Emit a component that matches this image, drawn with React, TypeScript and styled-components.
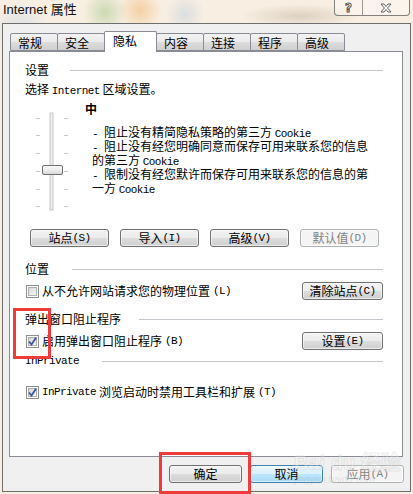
import React from "react";
import styled, { createGlobalStyle } from "styled-components";

const GlobalStyle = createGlobalStyle`
  html, body {
    margin: 0;
    padding: 0;
    width: 413px;
    height: 494px;
    overflow: hidden;
  }
  body {
    font-family: "Noto Sans CJK SC", "Liberation Sans", sans-serif;
    font-size: 12px;
    color: #000;
    background: #f7eddd;
  }
`;

const Screen = styled.div`
  position: relative;
  width: 413px;
  height: 494px;
  display: flex;
  flex-direction: column;
  background: radial-gradient(circle at 105px 12px, rgba(150, 190, 120, 0.45), transparent 22px),
    radial-gradient(circle at 140px 10px, rgba(240, 170, 90, 0.45), transparent 22px),
    radial-gradient(circle at 185px 14px, rgba(190, 205, 225, 0.5), transparent 20px),
    radial-gradient(ellipse 60px 12px at 300px 16px, rgba(170, 150, 130, 0.35), transparent),
    radial-gradient(circle at 20px 30px, rgba(200, 215, 235, 0.6), transparent 30px),
    #f8efe2;
`;

const TitleBar = styled.div`
  height: 23px;
  display: flex;
  justify-content: space-between;
  align-items: flex-start;
`;

const Caption = styled.div`
  padding-left: 3px;
  font-family: "Liberation Sans", "Noto Sans CJK SC", sans-serif;
  font-size: 13px;
  line-height: 20px;
  color: #111;
`;

const CaptionButtons = styled.div`
  display: flex;
  margin-right: 3px;
  height: 15px;
  border: 1px solid rgba(90, 90, 90, 0.75);
  border-top: none;
  border-radius: 0 0 4px 4px;
  background: rgba(255, 255, 255, 0.35);
  overflow: hidden;
`;

const CaptionButton = styled.div<{ $w: number; $divider?: boolean }>`
  width: ${(p) => p.$w}px;
  display: flex;
  align-items: center;
  justify-content: center;
  border-right: ${(p) => (p.$divider ? "1px solid rgba(90,90,90,0.6)" : "none")};
  font-family: "DejaVu Sans", sans-serif;
  font-weight: bold;
  font-size: 12px;
  color: #fff;
  -webkit-text-stroke: 1px #555;
`;

const Frame = styled.div`
  flex: 1;
  margin: 0 2px 2px 2px;
  border: 1px solid #6e6e6e;
  background: #f0f0f0;
  display: flex;
  flex-direction: column;
`;

const TabStrip = styled.div`
  display: flex;
  align-items: flex-end;
  height: 20px;
  margin: 7px 0 0 7px;
  position: relative;
  z-index: 1;
`;

const Tab = styled.div<{ $active?: boolean }>`
  width: ${(p) => (p.$active ? 53 : 48)}px;
  height: ${(p) => (p.$active ? 21 : 18)}px;
  margin-left: -1px;
  margin-bottom: ${(p) => (p.$active ? -1 : 0)}px;
  box-sizing: border-box;
  border: 1px solid #898c95;
  border-bottom: ${(p) => (p.$active ? "none" : "1px solid #898c95")};
  border-radius: 2px 2px 0 0;
  padding: ${(p) => (p.$active ? "1px 0 0 8px" : "1px 0 0 7px")};
  line-height: 15px;
  background: ${(p) =>
    p.$active
      ? "#fff"
      : "linear-gradient(#f2f2f2 0%, #ebebeb 50%, #dddddd 51%, #cfcfcf 100%)"};
  position: relative;
  z-index: ${(p) => (p.$active ? 2 : 1)};
  &:first-child {
    margin-left: 0;
  }
`;

const Panel = styled.div`
  width: 394px;
  height: 406px;
  box-sizing: border-box;
  margin-left: 6px;
  border: 1px solid #898c95;
  background: #fff;
  padding: 11px 19px 0 15px;
  display: flex;
  flex-direction: column;
`;

const Heading = styled.div<{ $gap: number; $mt?: number }>`
  display: flex;
  align-items: center;
  gap: ${(p) => p.$gap}px;
  height: 14px;
  line-height: 14px;
  margin-top: ${(p) => p.$mt ?? 0}px;
  white-space: nowrap;
`;

const Rule = styled.div`
  flex: 1;
  height: 1px;
  background: #c4c8cc;
`;

const Lat = styled.span`
  font-family: "Liberation Mono", monospace;
  font-size: 11px;
  letter-spacing: -0.6px;
`;

const Line = styled.div<{ $mt?: number }>`
  line-height: 14px;
  margin-top: ${(p) => p.$mt ?? 0}px;
  white-space: nowrap;
`;

const SliderBlock = styled.div`
  display: flex;
  margin-top: 4px;
  height: 110px;
`;

const LevelText = styled.div`
  display: flex;
  flex-direction: column;
`;

const Level = styled.div`
  font-weight: bold;
  line-height: 14px;
  margin-bottom: 10px;
`;

const Bullets = styled.div`
  margin-left: 7px;
  line-height: 12px;
  white-space: nowrap;
`;

const ButtonRow = styled.div<{ $mt: number }>`
  display: flex;
  gap: 11px;
  margin: ${(p) => p.$mt}px 0 0 5px;
`;

const Button = styled.div<{ $w?: number; $disabled?: boolean; $hover?: boolean }>`
  width: ${(p) => p.$w ?? 79}px;
  height: 18px;
  box-sizing: border-box;
  border: 1px solid ${(p) => (p.$disabled ? "#adb2b5" : p.$hover ? "#3c7fb1" : "#707070")};
  border-radius: 3px;
  display: flex;
  align-items: center;
  justify-content: center;
  line-height: 14px;
  white-space: nowrap;
  color: ${(p) => (p.$disabled ? "#838383" : "#000")};
  background: ${(p) =>
    p.$disabled
      ? "#f4f4f4"
      : p.$hover
      ? "linear-gradient(#eaf6fd 0%, #d9f0fc 50%, #bee6fd 51%, #a7d9f5 100%)"
      : "linear-gradient(#f2f2f2 0%, #ebebeb 50%, #dddddd 51%, #cfcfcf 100%)"};
  box-shadow: inset 0 0 0 1px rgba(255, 255, 255, 0.6);
`;

const CheckRow = styled.div<{ $mt: number }>`
  display: flex;
  align-items: center;
  justify-content: space-between;
  margin-top: ${(p) => p.$mt}px;
  height: 18px;
`;

const CheckLabel = styled.label`
  display: flex;
  align-items: center;
  gap: 3px;
  margin-left: 1px;
  line-height: 14px;
  white-space: nowrap;
`;

const Box = styled.span`
  width: 13px;
  height: 13px;
  box-sizing: border-box;
  border: 1px solid #8e8f8f;
  padding: 1px;
  background: #fff;
  display: inline-flex;
`;

const BoxInner = styled.span`
  flex: 1;
  border: 1px solid #b0b0b0;
  background: linear-gradient(135deg, #d8d8d8, #f6f6f6);
  position: relative;
`;

const BottomRow = styled.div`
  display: flex;
  justify-content: flex-end;
  gap: 8px;
  margin-top: 8px;
  padding-right: 6px;
`;

const Highlight = styled.div<{ $x: number; $y: number; $w: number; $h: number }>`
  position: absolute;
  left: ${(p) => p.$x}px;
  top: ${(p) => p.$y}px;
  width: ${(p) => p.$w}px;
  height: ${(p) => p.$h}px;
  box-sizing: border-box;
  border: 3px solid #ee3b3b;
  pointer-events: none;
`;

const Watermark = styled.div`
  position: absolute;
  left: 294px;
  top: 452px;
  color: rgba(255, 255, 255, 0.25);
  -webkit-text-stroke: 1px rgba(190, 190, 190, 0.3);
  font-family: "Liberation Sans", "Noto Sans CJK SC", sans-serif;
  pointer-events: none;
`;

const WatermarkTitle = styled.div`
  font-size: 20px;
  font-weight: bold;
  line-height: 22px;
`;

const WatermarkSub = styled.div`
  font-size: 10px;
  line-height: 12px;
  color: rgba(160, 160, 160, 0.25);
  -webkit-text-stroke: 0;
`;

const Slider = () => (
  <svg width="60" height="110" viewBox="0 0 60 110">
    <defs>
      <linearGradient id="thumb" x1="0" y1="0" x2="0" y2="1">
        <stop offset="0" stopColor="#fbfbfb" />
        <stop offset="0.5" stopColor="#ececec" />
        <stop offset="1" stopColor="#d6d6d6" />
      </linearGradient>
    </defs>
    <rect x="25" y="11" width="3" height="97" fill="#efefef" stroke="#b9b9b9" strokeWidth="0.8" />
    {[16, 33, 51, 69, 87, 104].map((y) => (
      <g key={y} stroke="#c8c8c8" strokeWidth="1">
        <line x1="11" y1={y + 0.5} x2="15" y2={y + 0.5} />
        <line x1="39" y1={y + 0.5} x2="43" y2={y + 0.5} />
      </g>
    ))}
    <rect x="17.5" y="63.5" width="20" height="9" rx="1.5" fill="url(#thumb)" stroke="#6f6f6f" />
  </svg>
);

const Check = ({ checked }: { checked?: boolean }) => (
  <Box>
    <BoxInner>
      {checked && (
        <svg width="9" height="9" viewBox="0 0 9 9" style={{ position: "absolute", left: -1, top: -1 }}>
          <path d="M1 4.5 L3.5 7.5 L8 0.8" fill="none" stroke="#3b55a0" strokeWidth="1.8" />
        </svg>
      )}
    </BoxInner>
  </Box>
);

const App = () => {
  return (
    <Screen>
      <GlobalStyle />
      <TitleBar>
        <Caption>Internet 属性</Caption>
        <CaptionButtons>
          <CaptionButton $w={27} $divider>?</CaptionButton>
          <CaptionButton $w={46}>
            <svg width="14" height="10" viewBox="0 0 14 10">
              <path
                d="M2 1 H5 L7 3.5 L9 1 H12 L8.6 5 L12 9 H9 L7 6.5 L5 9 H2 L5.4 5 Z"
                fill="#fff"
                stroke="#555"
                strokeWidth="0.9"
              />
            </svg>
          </CaptionButton>
        </CaptionButtons>
      </TitleBar>
      <Frame>
        <TabStrip>
          <Tab>常规</Tab>
          <Tab>安全</Tab>
          <Tab $active>隐私</Tab>
          <Tab>内容</Tab>
          <Tab>连接</Tab>
          <Tab>程序</Tab>
          <Tab>高级</Tab>
        </TabStrip>
        <Panel>
          <Heading $gap={21}>
            设置
            <Rule />
          </Heading>
          <Line $mt={5}>
            选择 <Lat>Internet</Lat> 区域设置。
          </Line>
          <SliderBlock>
            <Slider />
            <LevelText>
              <Level>中</Level>
              <Bullets>
                <Lat>- </Lat>阻止没有精简隐私策略的第三方 <Lat>Cookie</Lat>
                <br />
                <Lat>- </Lat>阻止没有经您明确同意而保存可用来联系您的信息
                <br />
                的第三方 <Lat>Cookie</Lat>
                <br />
                <Lat>- </Lat>限制没有经您默许而保存可用来联系您的信息的第
                <br />
                一方 <Lat>Cookie</Lat>
              </Bullets>
            </LevelText>
          </SliderBlock>
          <ButtonRow $mt={17}>
            <Button>
              站点<Lat>(S)</Lat>
            </Button>
            <Button>
              导入<Lat>(I)</Lat>
            </Button>
            <Button>
              高级<Lat>(V)</Lat>
            </Button>
            <Button $disabled>
              默认值<Lat>(D)</Lat>
            </Button>
          </ButtonRow>
          <Heading $gap={23} $mt={15}>
            位置
            <Rule />
          </Heading>
          <CheckRow $mt={6}>
            <CheckLabel>
              <Check />
              从不允许网站请求您的物理位置 <Lat>(L)</Lat>
            </CheckLabel>
            <Button $w={81}>
              清除站点 <Lat>(C)</Lat>
            </Button>
          </CheckRow>
          <Heading $gap={18} $mt={12}>
            弹出窗口阻止程序
            <Rule />
          </Heading>
          <CheckRow $mt={6}>
            <CheckLabel>
              <Check checked />
              启用弹出窗口阻止程序 <Lat>(B)</Lat>
            </CheckLabel>
            <Button $w={81}>
              设置 <Lat>(E)</Lat>
            </Button>
          </CheckRow>
          <Heading $gap={23} $mt={4}>
            <Lat>InPrivate</Lat>
            <Rule />
          </Heading>
          <CheckRow $mt={15}>
            <CheckLabel>
              <Check checked />
              <Lat>InPrivate</Lat> 浏览启动时禁用工具栏和扩展 <Lat>(T)</Lat>
            </CheckLabel>
          </CheckRow>
        </Panel>
        <BottomRow>
          <Button $w={73}>确定</Button>
          <Button $w={73} $hover>
            取消
          </Button>
          <Button $w={73} $disabled>
            应用 <Lat>(A)</Lat>
          </Button>
        </BottomRow>
      </Frame>
      <Watermark>
        <WatermarkTitle>Bai du 经验</WatermarkTitle>
        <WatermarkSub>jingyan.baidu.com</WatermarkSub>
      </Watermark>
      <Highlight $x={13} $y={308} $w={38} $h={51} />
      <Highlight $x={159} $y={452} $w={92} $h={42} />
    </Screen>
  );
};

export default App;
